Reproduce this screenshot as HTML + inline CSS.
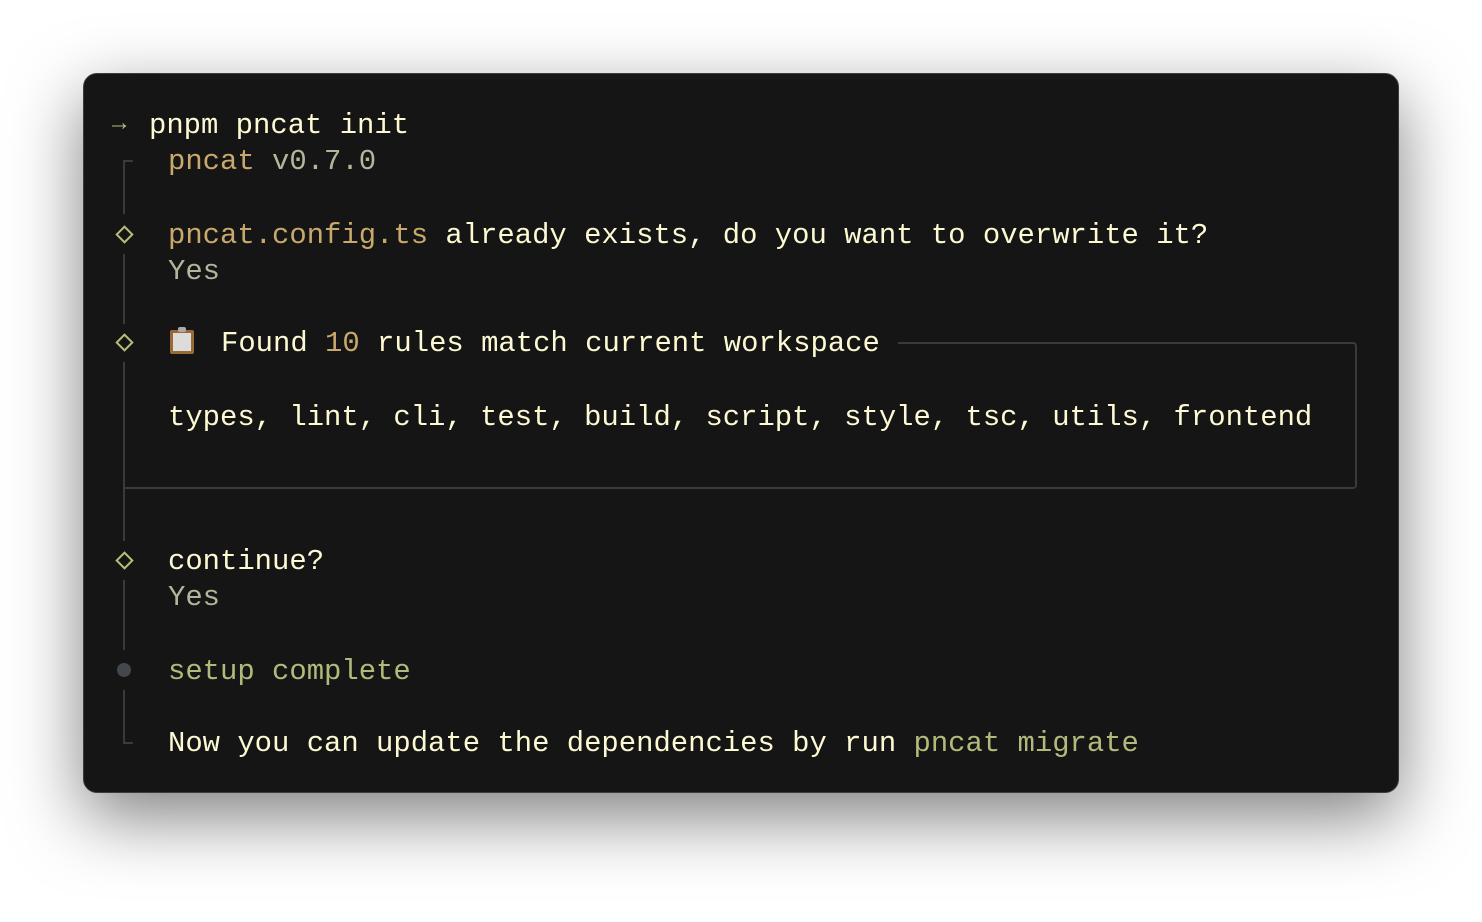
<!DOCTYPE html>
<html><head><meta charset="utf-8"><style>
html,body{margin:0;padding:0;width:1482px;height:922px;overflow:hidden;background:#fff;}
.card{position:absolute;left:83px;top:73px;width:1314px;height:718px;background:#151515;border:1px solid #3c3c3c;border-radius:14px;box-shadow:0 24px 70px rgba(0,0,0,0.5);}
.t{position:absolute;font-family:"Liberation Mono",monospace;font-size:28.9px;line-height:36px;white-space:pre;color:#fdf9d3;height:36px;}
.g{color:#c9a86c}.v{color:#b4b69c}.y{color:#b1b59a}.s{color:#b3b97b}
.l{position:absolute;background:#3a3a3a;}
.d{position:absolute;width:9px;height:9px;border:2px solid #b8bd7a;transform:rotate(45deg);}
</style></head><body>
<div class="card"></div>
<div class="t" style="left:112px;top:107px;color:#b8bd7a;font-size:24px;font-weight:bold">→</div>
<div class="t" style="left:149px;top:108px">pnpm pncat init</div>
<div class="t" style="left:168px;top:144px"><span class="g">pncat</span><span class="v"> v0.7.0</span></div>
<div class="t" style="left:168px;top:218px"><span class="g">pncat.config.ts</span> already exists, do you want to overwrite it?</div>
<div class="t y" style="left:168px;top:254px">Yes</div>
<div class="t" style="left:221px;top:326px">Found <span class="g">10</span> rules match current workspace</div>
<div class="t" style="left:168px;top:400px">types, lint, cli, test, build, script, style, tsc, utils, frontend</div>
<div class="t" style="left:168px;top:544px">continue?</div>
<div class="t y" style="left:168px;top:580px">Yes</div>
<div class="t s" style="left:168px;top:654px">setup complete</div>
<div class="t" style="left:168px;top:726px">Now you can update the dependencies by run <span class="s">pncat migrate</span></div>
<!-- clipboard -->
<div style="position:absolute;left:170px;top:330px;width:24px;height:24px;background:#9a6a36;border-radius:2px"></div>
<div style="position:absolute;left:173px;top:333px;width:18px;height:18px;background:#dcdcdc"></div>
<div style="position:absolute;left:178px;top:327px;width:8px;height:5px;background:#aaa;border-radius:2px"></div>
<!-- rail -->
<div class="l" style="left:123px;top:160px;width:10px;height:2px"></div>
<div class="l" style="left:123px;top:160px;width:2px;height:54px"></div>
<div class="d" style="left:118px;top:228px"></div>
<div class="l" style="left:123px;top:254px;width:2px;height:70px"></div>
<div class="d" style="left:118px;top:336px"></div>
<div class="l" style="left:123px;top:362px;width:2px;height:126px"></div>
<div class="l" style="left:123px;top:487px;width:780px;height:2px"></div>
<div style="position:absolute;left:898px;top:342px;width:457px;height:143px;border:2px solid #3a3a3a;border-left:none;border-radius:0 4px 4px 0"></div>
<div class="l" style="left:123px;top:489px;width:2px;height:52px"></div>
<div class="d" style="left:118px;top:554px"></div>
<div class="l" style="left:123px;top:580px;width:2px;height:70px"></div>
<div style="position:absolute;left:117px;top:663px;width:14px;height:14px;border-radius:50%;background:#44474c"></div>
<div class="l" style="left:123px;top:690px;width:2px;height:54px"></div>
<div class="l" style="left:123px;top:742px;width:10px;height:2px"></div>
</body></html>
